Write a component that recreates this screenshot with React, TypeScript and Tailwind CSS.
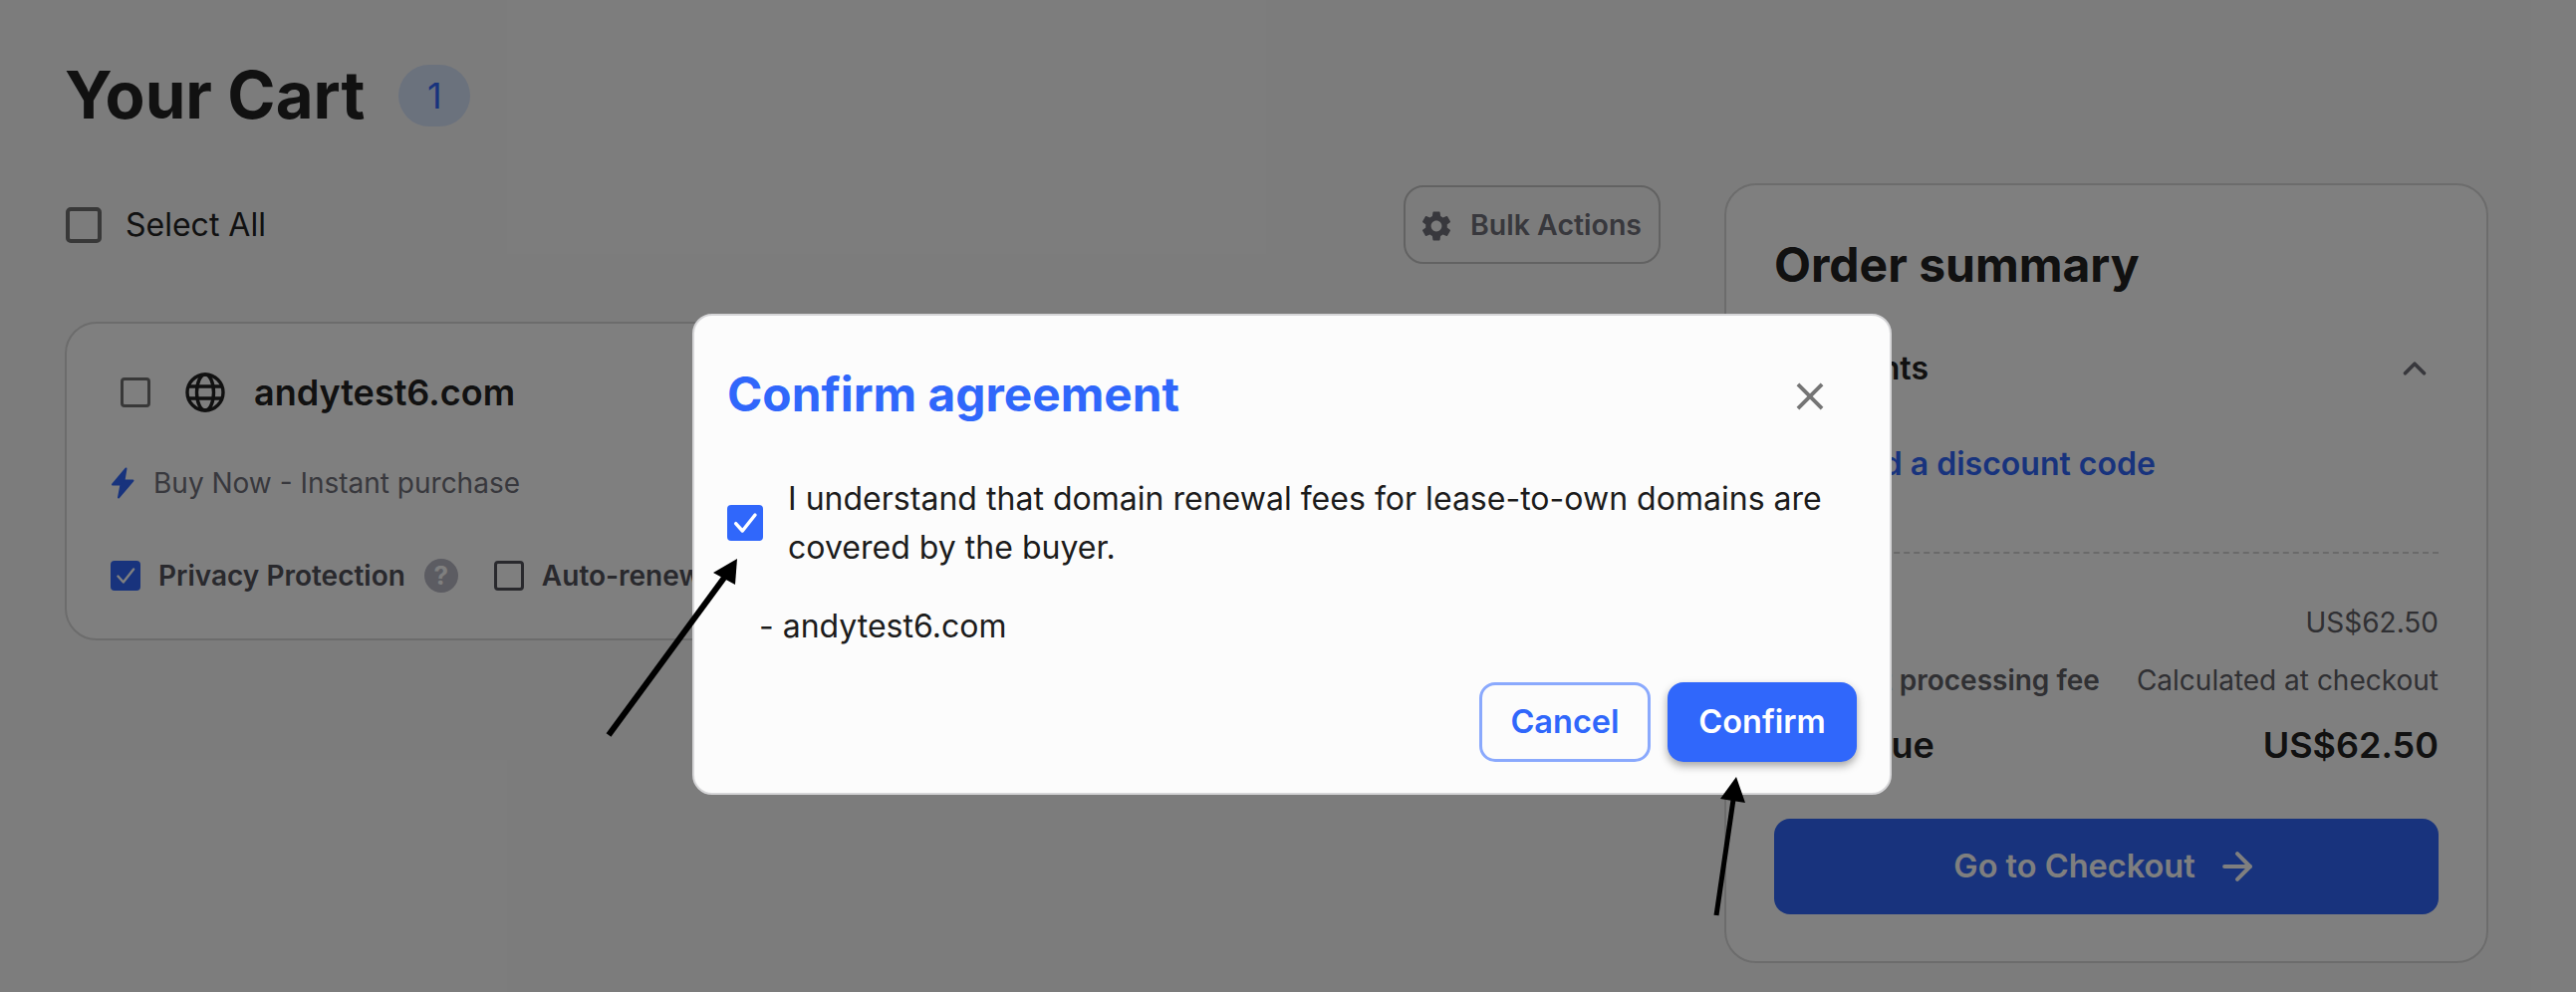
import { MdSettings, MdClose } from 'react-icons/md';
import { ChevronUp, ArrowRight } from 'lucide-react';

function Check({ size, color, stroke }: { size: number; color: string; stroke: number }) {
  return (
    <svg width={size} height={size} viewBox="0 0 24 24" fill="none" stroke={color} strokeWidth={stroke} strokeLinecap="round" strokeLinejoin="round">
      <path d="M5 12.5l5 5.5L19.5 6" />
    </svg>
  );
}

function Globe() {
  return (
    <svg width="40" height="40" viewBox="0 0 40 40" fill="none" stroke="#222222" strokeWidth="3.4" className="shrink-0">
      <circle cx="20" cy="20" r="18" />
      <ellipse cx="20" cy="20" rx="8.5" ry="18" />
      <path d="M3.5 14h33M3.5 26h33" />
    </svg>
  );
}

function Bolt() {
  return (
    <svg width="24" height="32" viewBox="0 0 24 32" className="shrink-0">
      <path d="M15.5 1.5 2 17.5h8.5L8 30.5 22.5 13.5h-9z" fill="#3067fb" stroke="#3067fb" strokeWidth="2" strokeLinejoin="round" />
    </svg>
  );
}

export default function App() {
  return (
    <div className="relative h-[996px] w-full overflow-hidden bg-[#f9f9f9] font-['Inter',sans-serif] text-[#222222]">
      <div className="px-[65px] pt-[65px]">
        <div className="mb-[57px] flex h-[62px] items-center">
          <h1 className="text-[65.3px] leading-none font-bold">Your Cart</h1>
          <span className="ml-[34px] flex h-[62px] w-[72px] items-center justify-center rounded-full bg-[#d6e4fb] text-[36px] text-[#3067fb]">1</span>
        </div>

        <div className="flex gap-[64px]">
          <div className="w-[1602px] pt-[2px]">
            <div className="mb-[58px] flex h-[79px] items-center justify-between">
              <div className="ml-[1px] flex items-center gap-[24px]">
                <div className="h-[36px] w-[36px] rounded-[5px] border-[4px] border-[#707070]" />
                <span className="text-[32px] leading-none">Select All</span>
              </div>
              <button className="flex h-[79px] w-[258px] items-center gap-[16px] rounded-[20px] border-2 border-[#c4c4c4] pt-[2px] pl-[13px] text-[28.5px] font-semibold text-[#71717a]">
                <MdSettings size={36} />
                Bulk Actions
              </button>
            </div>

            <div className="h-[320px] rounded-[32px] border-2 border-[#d8d8d8] bg-white pt-[49px] pl-[44px]">
              <div className="ml-[10px] flex h-[40px] items-center">
                <div className="h-[30px] w-[30px] rounded-[4px] border-[3px] border-[#707070]" />
                <div className="ml-[35px]"><Globe /></div>
                <span className="ml-[29px] text-[36px] leading-none font-semibold">andytest6.com</span>
              </div>
              <div className="mt-[55px] flex h-[32px] items-center gap-[19px]">
                <Bolt />
                <span className="text-[28px] leading-none text-[#71717a]">Buy Now - Instant purchase</span>
              </div>
              <div className="mt-[60px] flex h-[34px] items-center">
                <div className="flex h-[30px] w-[30px] items-center justify-center rounded-[4px] bg-[#3067fb]">
                  <Check size={26} color="#ffffff" stroke={2.2} />
                </div>
                <span className="ml-[18px] text-[28px] leading-none font-semibold text-[#52525b]">Privacy Protection</span>
                <span className="ml-[19px] flex h-[34px] w-[34px] items-center justify-center rounded-full bg-[#b8b8c4] text-[26px] leading-none font-bold text-white">?</span>
                <div className="ml-[36px] h-[30px] w-[30px] rounded-[4px] border-[3px] border-[#52525b]" />
                <span className="ml-[18px] text-[28px] leading-none font-semibold text-[#52525b]">Auto-renewal</span>
              </div>
            </div>
          </div>

          <div className="h-[783px] w-[767px] rounded-[32px] border-2 border-[#d8d8d8] bg-white pt-[56px] pr-[48px] pl-[48px]">
            <h2 className="text-[48px] leading-[48px] font-bold">Order summary</h2>
            <div className="mt-[60px] flex h-[40px] items-center justify-between">
              <span className="text-[32px] font-semibold">Discounts</span>
              <ChevronUp size={38} strokeWidth={2.4} className="mr-[5px] text-[#71717a]" />
            </div>
            <div className="mt-[56px] ml-[66px] flex h-[40px] items-center text-[32px] font-semibold text-[#3067fb]">Add a discount code</div>
            <div className="mt-[68px] border-t-2 border-dashed border-[#d4d4d4]" />
            <div className="mt-[49px] flex h-[40px] items-center justify-between text-[28px] text-[#606066]">
              <span>Subtotal</span>
              <span>US$62.50</span>
            </div>
            <div className="mt-[18px] flex h-[40px] items-center justify-between text-[28px] text-[#606066]">
              <span className="font-semibold">Payment processing fee</span>
              <span>Calculated at checkout</span>
            </div>
            <div className="mt-[23px] flex h-[44px] items-center justify-between text-[36px] font-semibold">
              <span>Total due</span>
              <span>US$62.50</span>
            </div>
            <button className="mt-[52px] flex h-[96px] w-full items-center justify-center gap-[20px] rounded-[16px] bg-[#3067fb] text-[32.5px] font-semibold text-white">
              Go to Checkout
              <ArrowRight size={44} strokeWidth={2.2} />
            </button>
          </div>
        </div>
      </div>

      {/* backdrop */}
      <div className="absolute inset-0 bg-black/50" />

      {/* modal */}
      <div className="absolute top-[315px] left-[695px] h-[483px] w-[1204px] rounded-[20px] border-2 border-[#d6d6d8] bg-[#fcfcfc] pt-[58px] pr-[33px] pl-[33px] text-[#1c1c1c]">
        <div className="flex h-[44px] items-center justify-between">
          <h2 className="text-[47.8px] leading-none font-bold text-[#3067fb]">Confirm agreement</h2>
          <MdClose size={46} className="mt-[2px] mr-[24px] text-[#757575]" />
        </div>
        <div className="mt-[57px] flex items-center gap-[25px]">
          <div className="flex h-[36px] w-[36px] items-center justify-center rounded-[4px] bg-[#3067fb]">
            <Check size={32} color="#ffffff" stroke={2.6} />
          </div>
          <p className="w-[1060px] text-[32px] leading-[49px] tracking-[0.02px]">I understand that domain renewal fees for lease-to-own domains are covered by the buyer.</p>
        </div>
        <p className="mt-[31px] ml-[32px] text-[32px] leading-[48px]">- andytest6.com</p>
        <div className="mt-[32px] flex justify-end gap-[17px]">
          <button className="h-[80px] w-[172px] rounded-[16px] border-[3px] border-[#8aa9fd] text-[32.5px] font-semibold text-[#3067fb]">Cancel</button>
          <button className="h-[80px] w-[190px] rounded-[16px] bg-[#3067fb] text-[32.5px] font-semibold text-white shadow-[0_4px_8px_rgba(0,0,0,0.35)]">Confirm</button>
        </div>
      </div>

      {/* annotation arrows */}
      <svg className="absolute inset-0" width="2586" height="996" viewBox="0 0 2586 996" fill="none">
        <path d="M611 738 727 580" stroke="#000000" strokeWidth="6" />
        <path d="M740 561 716 575 738 587z" fill="#000000" />
        <path d="M1723 919 1740 803" stroke="#000000" strokeWidth="5" />
        <path d="M1743 780 1727 802 1752 806z" fill="#000000" />
      </svg>
    </div>
  );
}
